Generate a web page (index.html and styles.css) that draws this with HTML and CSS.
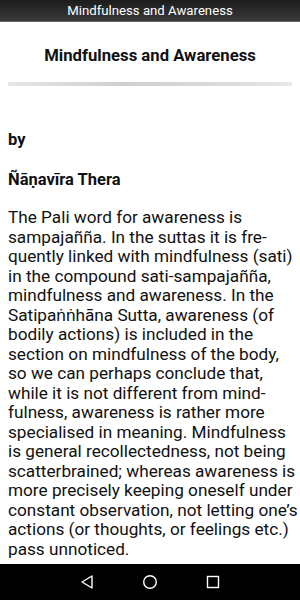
FILE: index.html
```html
<!DOCTYPE html>
<html>
<head>
<meta charset="utf-8">
<link rel="stylesheet" href="styles.css">
</head>
<body>
<div class="screen">
  <header class="appbar">Mindfulness and Awareness</header>
  <main class="content">
    <h1 class="title">Mindfulness and Awareness</h1>
    <div class="divider"></div>
    <p class="byline">by</p>
    <p class="author">Ñāṇavīra Thera</p>
    <p class="body">The Pali word for awareness is<br>sampajañña. In the suttas it is fre-<br>quently linked with mindfulness (sati)<br>in the compound sati-sampajañña,<br>mindfulness and awareness. In the<br>Satipaṅṅhāna Sutta, awareness (of<br>bodily actions) is included in the<br>section on mindfulness of the body,<br>so we can perhaps conclude that,<br>while it is not different from mind-<br>fulness, awareness is rather more<br>specialised in meaning. Mindfulness<br>is general recollectedness, not being<br>scatterbrained; whereas awareness is<br>more precisely keeping oneself under<br>constant observation, not letting one’s<br>actions (or thoughts, or feelings etc.)<br>pass unnoticed.</p>
  </main>
  <nav class="navbar">
    <svg class="nav-icon" width="16" height="16" viewBox="0 0 16 16"><path d="M13 2 L3 8 L13 14 Z" fill="none" stroke="#fff" stroke-width="1.4" stroke-linejoin="round"/></svg>
    <svg class="nav-icon" width="16" height="16" viewBox="0 0 16 16"><circle cx="8" cy="8" r="6.3" fill="none" stroke="#fff" stroke-width="1.4"/></svg>
    <svg class="nav-icon" width="16" height="16" viewBox="0 0 16 16"><rect x="2.5" y="2.5" width="11" height="11" fill="none" stroke="#fff" stroke-width="1.4"/></svg>
  </nav>
</div>
</body>
</html>
```
FILE: styles.css
```css
html, body {
  margin: 0;
  padding: 0;
  background: #fff;
}
.screen {
  width: 300px;
  height: 600px;
  display: flex;
  flex-direction: column;
  overflow: hidden;
  font-family: Roboto, "Liberation Sans", sans-serif;
  color: #111;
}
.appbar {
  height: 22px;
  flex: 0 0 22px;
  background: linear-gradient(#1c1c1c, #3a3a3a);
  color: #fff;
  font-size: 13.2px;
  line-height: 22px;
  text-align: center;
  border-bottom: 1px solid #666;
  box-sizing: border-box;
}
.content {
  flex: 1;
  padding: 0 8px;
  overflow: hidden;
}
.title {
  margin: 23px 0 0;
  font-size: 16.7px;
  font-weight: bold;
  text-align: center;
  line-height: 22px;
}
.divider {
  margin-top: 15px;
  height: 4px;
  background: linear-gradient(90deg, #e6e6e6, #cfcfcf 40%, #dcdcdc 80%, #e8e8e8);
}
.byline, .author {
  margin: 0;
  font-weight: bold;
  font-size: 16.5px;
  line-height: 20px;
}
.byline {
  margin-top: 44px;
}
.author {
  margin-top: 20px;
}
.body {
  margin: 18px 0 0;
  font-size: 17.2px;
  line-height: 19.5px;
  white-space: nowrap;
}
.navbar {
  flex: 0 0 36px;
  background: #000;
  display: flex;
  justify-content: center;
  align-items: center;
  gap: 47px;
}
.nav-icon {
  display: block;
}
```
